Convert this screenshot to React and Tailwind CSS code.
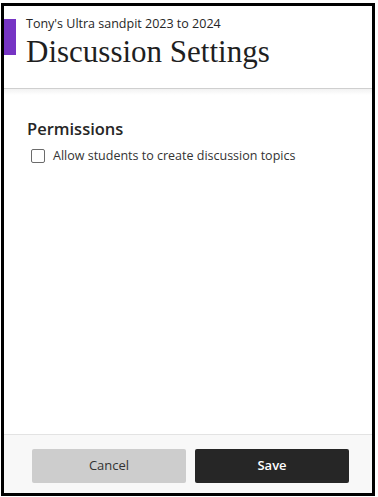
export default function App() {
  const sans = { fontFamily: '"Open Sans", "Noto Sans", sans-serif' };
  return (
    <div className="w-[378px] h-[497px] bg-white pt-[3px] pl-[1px] overflow-hidden" style={sans}>
      <div className="relative w-[374px] h-[493px] border-[3px] border-black bg-white flex flex-col">
        <div className="absolute left-0 top-[13px] w-[12px] h-[36px] bg-[#7634c4]" />
        <div className="h-[83px] shrink-0 pl-[22px] pt-[9px] border-b border-[#cfcfcf]">
          <div className="text-[12.5px] leading-[18px] text-[#262626]">Tony's Ultra sandpit 2023 to 2024</div>
          <div className="text-[31px] leading-[36px] text-[#1f1f1f] mt-[1px]" style={{ fontFamily: '"Liberation Serif", "Times New Roman", serif' }}>Discussion Settings</div>
        </div>
        <div className="flex-1 bg-white bg-gradient-to-b from-[#f2f2f2] to-white to-[6px] pl-[23px] pt-[29px]">
          <div className="text-[16.5px] leading-[22px] font-semibold text-[#262626]">Permissions</div>
          <div className="flex items-center mt-[7px] ml-[4px]">
            <div className="w-[14px] h-[14px] border-[1.5px] border-[#6b6b6b] rounded-[2px] bg-white" />
            <span className="ml-[8px] text-[12.5px] leading-[18px] text-[#333]">Allow students to create discussion topics</span>
          </div>
        </div>
        <div className="h-[59px] shrink-0 border-t border-[#e3e3e3] bg-[#f8f8f8] flex pl-[28px] pt-[14px] gap-[9px]">
          <button className="w-[154px] h-[34px] rounded-[2px] bg-[#cdcdcd] text-[#333] text-[13px]" style={sans}>Cancel</button>
          <button className="w-[154px] h-[34px] rounded-[2px] bg-[#262626] text-white text-[13px] font-semibold" style={sans}>Save</button>
        </div>
      </div>
    </div>
  );
}
